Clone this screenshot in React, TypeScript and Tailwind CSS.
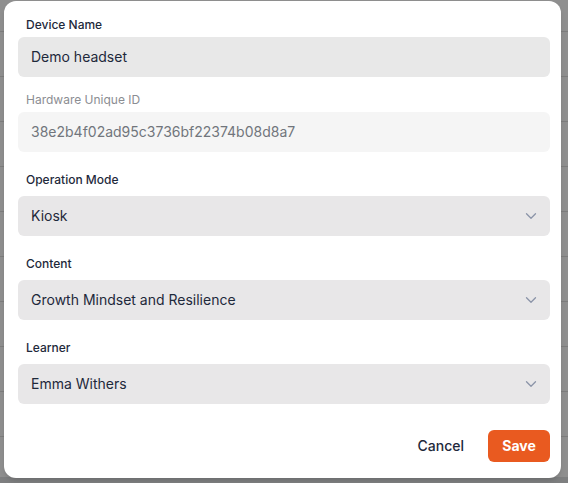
import { ChevronDown } from "lucide-react";

const rows = Array.from({ length: 10 });

function Field({
  label,
  value,
  muted,
  select,
  className,
}: {
  label: string;
  value: string;
  muted?: boolean;
  select?: boolean;
  className?: string;
}) {
  return (
    <div className={className}>
      <p
        className={`px-2 text-xs leading-4 font-medium ${
          muted ? "text-[#8b8d92] font-normal" : "text-[#1e293b]"
        } ${select ? "mb-2" : "mb-1"}`}
      >
        {label}
      </p>
      <div
        className={`flex h-10 items-center justify-between rounded-md pl-[13px] pr-[10px] text-sm ${
          muted
            ? "bg-[#f5f5f5] text-[#71757c]"
            : select
            ? "bg-[#e8e7e8] text-[#1e293b]"
            : "bg-[#e8e8e8] text-[#1e293b]"
        }`}
      >
        <span>{value}</span>
        {select && <ChevronDown size={18} strokeWidth={1.75} className="text-[#8b94a8]" />}
      </div>
    </div>
  );
}

export default function App() {
  return (
    <div
      className="relative h-[483px] w-[568px] overflow-hidden bg-[#8f8f8f]"
      style={{ fontFamily: "Inter, 'Liberation Sans', sans-serif" }}
    >
      {/* page behind the overlay */}
      <div className="flex flex-col">
        <div className="h-[32px] border-b border-[#7d7d7d]" />
        {rows.map((_, i) => (
          <div key={i} className="h-[45px] border-b border-[#7d7d7d]" />
        ))}
      </div>
      <div className="absolute bottom-0 left-0 right-0 h-[6px] bg-[#7e7f80]" />

      {/* Dialog */}
      <div className="absolute left-[4px] top-[1px] flex h-[477px] w-[557px] flex-col rounded-xl bg-white pl-[14px] pr-[11px] pt-[16px] shadow-md">
        <Field label="Device Name" value="Demo headset" />
        <Field
          label="Hardware Unique ID"
          value="38e2b4f02ad95c3736bf22374b08d8a7"
          muted
          className="mt-[15px]"
        />
        <Field label="Operation Mode" value="Kiosk" select className="mt-[20px]" />
        <Field label="Content" value="Growth Mindset and Resilience" select className="mt-[20px]" />
        <Field label="Learner" value="Emma Withers" select className="mt-[20px]" />

        <div className="mt-[26px] flex items-center justify-end gap-6">
          <button className="text-sm font-medium text-[#1e293b]">Cancel</button>
          <button className="h-8 w-[62px] rounded-md bg-[#e95a20] text-sm font-bold text-white">
            Save
          </button>
        </div>
      </div>
    </div>
  );
}
